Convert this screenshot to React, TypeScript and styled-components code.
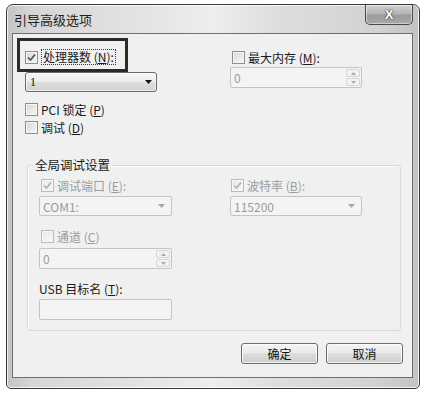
import React from "react";
import styled, { createGlobalStyle } from "styled-components";

const Global = createGlobalStyle`
  html, body { margin: 0; padding: 0; background: #ffffff; }
  body { font-family: "Noto Sans CJK SC", "Noto Sans", sans-serif; }
  * { box-sizing: border-box; }
`;

const FONT = `"Noto Sans CJK SC", "Noto Sans", sans-serif`;

const Page = styled.div`
  width: 425px;
  height: 394px;
  padding: 4px 5px 5px 6px;
  background: #ffffff;
`;

const Window = styled.div`
  width: 414px;
  height: 385px;
  border: 1px solid #3a3a3a;
  border-radius: 7px 7px 5px 5px;
  padding: 0 6px 10px 5px;
  display: flex;
  flex-direction: column;
  background: linear-gradient(90deg, #c4c4c4 0%, #d6d6d6 6%, #e2e2e2 30%, #eeeeee 50%, #dedede 65%, #d2d2d2 90%, #c2c2c2 100%);
  box-shadow: inset 0 0 0 1px rgba(255, 255, 255, 0.75);
`;

const TitleBar = styled.div`
  height: 28px;
  flex: none;
  display: flex;
  justify-content: space-between;
  padding-left: 2px;
`;

const Title = styled.div`
  font-family: ${FONT};
  font-size: 13px;
  line-height: 28px;
  color: #1e1e1e;
  padding-top: 1px;
`;

const CloseButton = styled.div`
  width: 48px;
  height: 20px;
  border: 1px solid #4a4a4a;
  border-top: none;
  border-radius: 0 0 5px 5px;
  background: linear-gradient(180deg, #d2d2d2 0%, #b4b4b4 45%, #9c9c9c 55%, #a8a8a8 100%);
  box-shadow: inset 0 0 0 1px rgba(255, 255, 255, 0.45);
  display: flex;
  align-items: center;
  justify-content: center;
  font-family: "Liberation Sans", sans-serif;
  font-weight: bold;
  font-size: 13px;
  color: #ffffff;
  text-shadow: 0 0 2px #333, 0 0 1px #333;
`;

const Client = styled.div`
  flex: 1;
  border: 1px solid #6e6e6e;
  background: #f0f0f0;
  display: flex;
  flex-direction: column;
`;

const TopSection = styled.div`
  display: grid;
  grid-template-columns: 213px 1fr;
  padding: 4px 0 0 4px;
`;

const Column = styled.div<{ $top?: number; $left?: number }>`
  display: flex;
  flex-direction: column;
  align-items: flex-start;
  padding-top: ${(p) => p.$top ?? 0}px;
  padding-left: ${(p) => p.$left ?? 0}px;
`;

const HighlightBox = styled.div`
  width: 111px;
  height: 34px;
  border: 3px solid #2b2b2b;
  display: flex;
  align-items: center;
  padding: 4px 0 0 5px;
`;

const Row = styled.div<{ $mt?: number; $ml?: number; $disabled?: boolean }>`
  display: flex;
  align-items: center;
  gap: 3px;
  height: 16px;
  margin-top: ${(p) => p.$mt ?? 0}px;
  margin-left: ${(p) => p.$ml ?? 0}px;
  font-family: ${FONT};
  font-size: 12px;
  color: ${(p) => (p.$disabled ? "#9c9c9c" : "#1a1a1a")};
  white-space: nowrap;
`;

const FocusLabel = styled.span`
  border: 1px dotted #3a3a3a;
  padding: 0 1px;
  line-height: 14px;
`;

const Mn = styled.span`
  text-decoration: underline;
`;

const Box = styled.span<{ $disabled?: boolean }>`
  width: 13px;
  height: 13px;
  flex: none;
  border: 1px solid ${(p) => (p.$disabled ? "#bcbcbc" : "#8e8e8e")};
  background: ${(p) =>
    p.$disabled
      ? "linear-gradient(135deg, #e8e8e8, #f8f8f8)"
      : "linear-gradient(135deg, #d6d6d6, #f7f7f7)"};
  box-shadow: inset 0 0 0 1px #f6f6f6;
  display: inline-flex;
  align-items: center;
  justify-content: center;
`;

const Check: React.FC<{ checked?: boolean; disabled?: boolean }> = ({ checked, disabled }) => (
  <Box $disabled={disabled}>
    {checked && (
      <svg width="11" height="11" viewBox="0 0 11 11">
        <path
          d="M2 5.5 L4.5 8 L9 2.5"
          fill="none"
          stroke={disabled ? "#b0b0b0" : "#555555"}
          strokeWidth="1.7"
        />
      </svg>
    )}
  </Box>
);

const Combo = styled.div<{ $w: number; $mt?: number; $ml?: number }>`
  width: ${(p) => p.$w}px;
  height: 20px;
  margin-top: ${(p) => p.$mt ?? 0}px;
  margin-left: ${(p) => p.$ml ?? 0}px;
  border: 1px solid #6a6a6a;
  border-radius: 3px;
  background: linear-gradient(180deg, #f6f6f6 0%, #ececec 48%, #dedede 52%, #d2d2d2 100%);
  box-shadow: inset 0 0 0 1px rgba(255, 255, 255, 0.7);
  display: flex;
  align-items: center;
  justify-content: space-between;
  padding: 0 4px 0 4px;
  font-family: "Liberation Serif", ${FONT};
  font-size: 12px;
  color: #111;
`;

const Field = styled.div<{ $w: number; $h?: number; $mt?: number }>`
  width: ${(p) => p.$w}px;
  height: ${(p) => p.$h ?? 21}px;
  margin-top: ${(p) => p.$mt ?? 0}px;
  border: 1px solid #c4c4c4;
  border-radius: 2px;
  background: #f4f4f4;
  display: flex;
  align-items: center;
  justify-content: space-between;
  padding-left: 3px;
  font-family: ${FONT};
  font-size: 12px;
  color: #9a9a9a;
`;

const SpinButtons = styled.div`
  width: 15px;
  height: 100%;
  display: flex;
  flex-direction: column;
  padding: 1px 1px 1px 0;
  gap: 1px;
`;

const SpinHalf = styled.div`
  flex: 1;
  border: 1px solid #d6d6d6;
  border-radius: 2px;
  background: #f2f2f2;
  display: flex;
  align-items: center;
  justify-content: center;
`;

const Tri: React.FC<{ down?: boolean; color: string; w?: number; h?: number }> = ({ down, color, w = 5, h = 3 }) => (
  <svg width={w} height={h} viewBox={`0 0 ${w} ${h}`}>
    <polygon points={down ? `0,0 ${w},0 ${w / 2},${h}` : `0,${h} ${w},${h} ${w / 2},0`} fill={color} />
  </svg>
);

const Spin: React.FC<{ w: number; mt?: number }> = ({ w, mt }) => (
  <Field $w={w} $mt={mt}>
    <span>0</span>
    <SpinButtons>
      <SpinHalf>
        <Tri color="#a8a8a8" />
      </SpinHalf>
      <SpinHalf>
        <Tri down color="#a8a8a8" />
      </SpinHalf>
    </SpinButtons>
  </Field>
);

const ComboDisabledArrow = styled.span`
  display: flex;
  padding-right: 6px;
`;

const GroupFrame = styled.div`
  width: 374px;
  margin: 30px 0 0 14px;
  border: 1px solid #d8d8d8;
  border-radius: 3px;
  box-shadow: inset 1px 1px 0 #ffffff;
`;

const Caption = styled.div`
  width: fit-content;
  margin: -9px 0 0 5px;
  padding: 0 2px;
  background: #f0f0f0;
  font-family: ${FONT};
  font-size: 12.5px;
  line-height: 16px;
  color: #1a1a1a;
`;

const GroupGrid = styled.div`
  display: grid;
  grid-template-columns: 191px 1fr;
  margin-top: 4px;
  padding: 0 0 10px 11px;
`;

const PlainLabel = styled.div<{ $mt?: number }>`
  height: 16px;
  margin-top: ${(p) => p.$mt ?? 0}px;
  font-family: ${FONT};
  font-size: 12px;
  line-height: 16px;
  color: #1a1a1a;
  white-space: nowrap;
`;

const ButtonBar = styled.div`
  display: flex;
  justify-content: flex-end;
  gap: 8px;
  margin-top: 12px;
  padding-right: 9px;
`;

const Button = styled.div`
  width: 77px;
  height: 21px;
  border: 1px solid #6c6c6c;
  border-radius: 3px;
  background: linear-gradient(180deg, #f4f4f4 0%, #ebebeb 46%, #dcdcdc 52%, #cfcfcf 100%);
  box-shadow: inset 0 0 0 1px rgba(255, 255, 255, 0.75);
  display: flex;
  align-items: center;
  justify-content: center;
  font-family: ${FONT};
  font-size: 12px;
  color: #111;
`;

export default function App() {
  return (
    <Page>
      <Global />
      <Window>
        <TitleBar>
          <Title>引导高级选项</Title>
          <CloseButton>X</CloseButton>
        </TitleBar>
        <Client>
          <TopSection>
            <Column>
              <HighlightBox>
                <Row>
                  <Check checked />
                  <FocusLabel>
                    处理器数 (<Mn>N</Mn>):
                  </FocusLabel>
                </Row>
              </HighlightBox>
              <Combo $w={132} $ml={8}>
                <span>1</span>
                <Tri down color="#111" w={7} h={4} />
              </Combo>
              <Row $mt={9} $ml={8}>
                <Check />
                <span>
                  PCI 锁定 (<Mn>P</Mn>)
                </span>
              </Row>
              <Row $mt={2} $ml={8}>
                <Check />
                <span>
                  调试 (<Mn>D</Mn>)
                </span>
              </Row>
            </Column>
            <Column $top={11}>
              <Row $ml={2}>
                <Check />
                <span>
                  最大内存 (<Mn>M</Mn>):
                </span>
              </Row>
              <Spin w={132} mt={2} />
            </Column>
          </TopSection>

          <GroupFrame>
            <Caption>全局调试设置</Caption>
            <GroupGrid>
              <Column>
                <Row $ml={2} $disabled>
                  <Check checked disabled />
                  <span>
                    调试端口 (<Mn>E</Mn>):
                  </span>
                </Row>
                <Field $w={133} $h={20} $mt={3}>
                  <span>COM1:</span>
                  <ComboDisabledArrow>
                    <Tri down color="#a8a8a8" w={7} h={4} />
                  </ComboDisabledArrow>
                </Field>
                <Row $mt={12} $ml={2} $disabled>
                  <Check disabled />
                  <span>
                    通道 (<Mn>C</Mn>)
                  </span>
                </Row>
                <Spin w={133} mt={4} />
                <PlainLabel $mt={12}>
                  USB 目标名 (<Mn>T</Mn>):
                </PlainLabel>
                <Field $w={133} $mt={2} />
              </Column>
              <Column>
                <Row $ml={1} $disabled>
                  <Check checked disabled />
                  <span>
                    波特率 (<Mn>B</Mn>):
                  </span>
                </Row>
                <Field $w={132} $h={20} $mt={3}>
                  <span>115200</span>
                  <ComboDisabledArrow>
                    <Tri down color="#a8a8a8" w={7} h={4} />
                  </ComboDisabledArrow>
                </Field>
              </Column>
            </GroupGrid>
          </GroupFrame>

          <ButtonBar>
            <Button>确定</Button>
            <Button>取消</Button>
          </ButtonBar>
        </Client>
      </Window>
    </Page>
  );
}
